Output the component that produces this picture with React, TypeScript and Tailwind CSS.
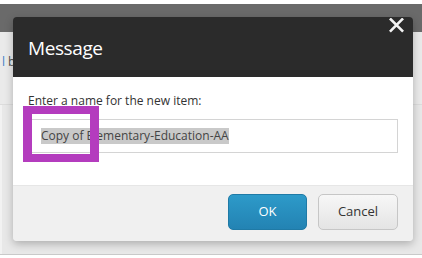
import React from "react";

function CloseIcon() {
    return (
        <svg viewBox="0 0 16 16" className="w-[17px] h-[15px]" fill="none">
            <path d="M2 1.5L14 13.5M14 1.5L2 13.5" stroke="#f4f4f4" strokeWidth="2.8" strokeLinecap="square" />
        </svg>
    );
}

export default function App() {
    return (
        <div className="relative w-[422px] h-[258px] overflow-hidden bg-[#e8e8e8] font-['Open_Sans',sans-serif]">
            {/* page behind the modal */}
            <div className="flex flex-col h-full">
                <div className="h-[4px] bg-white" />
                <div className="h-[28px] bg-[#6a6a6a]" />
                <div className="h-[73px] bg-[#eaeaea] border-b border-[#dcdcdc] pl-[2px] pt-[24px] text-[12px] leading-none">
                    <span className="text-[#3d7fc7]">l</span>
                    <span className="text-[#555] ml-[3px]">b</span>
                </div>
                <div className="flex-1 bg-[#e8e8e8] border-l-[2px] border-[#f2f2f2]" />
                <div className="h-[4px] border-t border-[#c9c9c9] bg-white" />
            </div>

            {/* modal */}
            <div className="absolute left-[13px] top-[17px] w-[400px] rounded-[4px] overflow-hidden shadow-[0_3px_8px_rgba(0,0,0,0.25)]">
                <div className="relative h-[60px] bg-[#2b2b2b] pl-[15px] flex items-center">
                    <span className="text-white text-[19px] tracking-[-0.4px] pt-[2px]">Message</span>
                    <button className="absolute right-[8px] top-[1px]">
                        <CloseIcon />
                    </button>
                </div>
                <div className="h-[108px] bg-white px-[15px] pt-[16px]">
                    <div className="text-[12px] leading-[16px] text-[#333]">Enter a name for the new item:</div>
                    <div className="mt-[10px] w-[370px] h-[34px] border border-[#d4d4d4] pl-[12px] flex items-center">
                        <span className="bg-[#c9c9c9] text-[#444] text-[12px] leading-[16px]">
                            Copy of Elementary-Education-AA
                        </span>
                    </div>
                </div>
                <div className="h-[56px] bg-[#f0f0f0] border-t border-[#e6e6e6] flex justify-end items-start pt-[8px] pr-[15px] gap-[11px]">
                    <button className="w-[79px] h-[36px] rounded-[5px] bg-gradient-to-b from-[#2d9ac9] to-[#2383b3] border border-[#1f7aa6] text-white text-[13px]">
                        OK
                    </button>
                    <button className="w-[80px] h-[36px] rounded-[5px] bg-gradient-to-b from-[#f7f7f7] to-[#e4e4e4] border border-[#c6c6c6] text-[#333] text-[13px]">
                        Cancel
                    </button>
                </div>
            </div>

            {/* annotation box */}
            <div className="absolute left-[23px] top-[106px] w-[76px] h-[56px] border-x-[9px] border-y-[8px] border-[#b43cbe]" />
        </div>
    );
}
